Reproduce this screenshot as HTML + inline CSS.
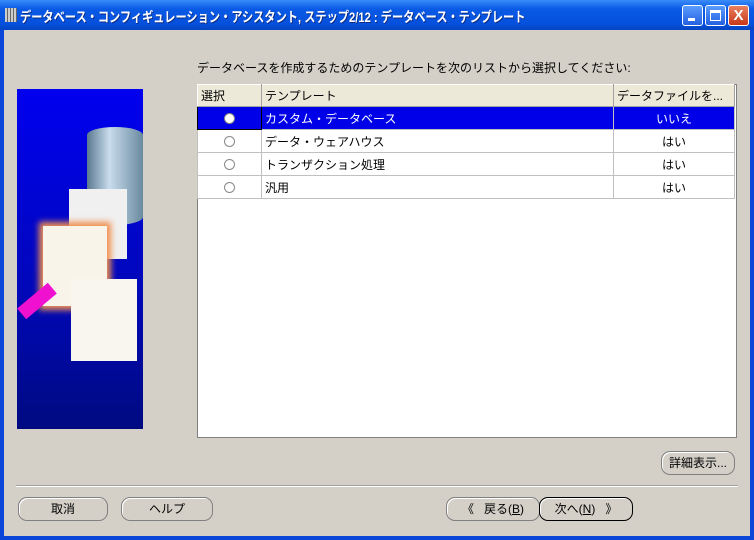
<!DOCTYPE html>
<html><head><meta charset="utf-8"><style>
*{margin:0;padding:0;box-sizing:border-box}
body{width:754px;height:540px;overflow:hidden;font-family:"Liberation Sans","Noto Sans CJK JP",sans-serif;font-size:12px;background:#0a46d8;position:relative}
.title{position:absolute;left:0;top:0;width:754px;height:30px;background:linear-gradient(#3a8cf8,#0a5ae6 30%,#0550dc 80%,#0444c0);color:#fff;font-size:14px;font-weight:bold}
.title span{position:absolute;left:20px;top:7px;text-shadow:1px 1px #0a2a80;white-space:nowrap;transform:scaleX(0.8);transform-origin:left}
.ico{position:absolute;left:5px;top:8px;width:12px;height:14px;background:repeating-linear-gradient(90deg,#ccc 0 2px,#666 2px 3px)}
.tb{position:absolute;top:5px;width:21px;height:21px;border:1px solid #fff;border-radius:3px;background:linear-gradient(#5a9cff,#2460e0)}
.client{position:absolute;left:4px;top:30px;width:746px;height:506px;background:#d4d0c8}
.a{position:absolute}
.img{left:13px;top:59px;width:126px;height:340px;background:linear-gradient(#0000f0,#0008b8 60%,#000a80)}
table{position:absolute;left:193px;top:54px;border-collapse:collapse;background:#fff;font-size:12px}
td{height:23px;border:1px solid #c0c0c0;padding:0 3px}
th{height:22px;font-weight:normal;text-align:left;padding:0 3px;background:#ece9d8;border:1px solid #a0a0a0;border-top-color:#fff;border-left-color:#fff}
.sel td{background:#0000e8;color:#fff}
.c{text-align:center}
.r{display:inline-block;width:11px;height:11px;border:1px solid #888;border-radius:50%;background:#fff;vertical-align:middle}
.tbl{left:193px;top:54px;width:540px;height:354px;background:#fff;border:1px solid #808080}
.btn{position:absolute;height:24px;border:1px solid #808080;border-radius:9px;background:#d4d0c8;text-align:center;line-height:22px;box-shadow:inset 1px 1px #fff}
</style></head><body>
<div class="title"><div class="ico"></div><span>データベース・コンフィギュレーション・アシスタント, ステップ2/12 : データベース・テンプレート</span>
<div class="tb" style="left:682px"><div style="position:absolute;left:5px;top:12px;width:7px;height:3px;background:#fff"></div></div>
<div class="tb" style="left:705px"><div style="position:absolute;left:4px;top:4px;width:11px;height:11px;border:1px solid #fff;border-top-width:3px"></div></div>
<div class="tb" style="left:728px;background:linear-gradient(#e88060,#c83818);color:#fff;text-align:center;font-size:15px;line-height:19px">X</div>
</div>
<div class="client">
<div class="a" style="left:193px;top:29px">データベースを作成するためのテンプレートを次のリストから選択してください:</div>
<div class="a img">
<div class="a" style="left:70px;top:38px;width:56px;height:98px;border-radius:28px/8px;background:linear-gradient(90deg,#5a7890,#c8dcec 40%,#6a8aa0)"></div>
<div class="a" style="left:52px;top:100px;width:58px;height:70px;background:#f0f0f0"></div>
<div class="a" style="left:26px;top:137px;width:64px;height:80px;background:#f8f4ea;box-shadow:0 0 6px 4px #f09050"></div>
<div class="a" style="left:54px;top:190px;width:66px;height:82px;background:#f8f6ee"></div>
<div class="a" style="left:0;top:205px;width:40px;height:14px;background:#f010d0;transform:rotate(-40deg)"></div>
</div>
<div class="a tbl"></div>
<table>
<tr><th style="width:64px">選択</th><th style="width:352px">テンプレート</th><th style="width:121px">データファイルを...</th></tr>
<tr class="sel"><td class="c" style="border-color:#000"><span class="r"></span></td><td>カスタム・データベース</td><td class="c">いいえ</td></tr>
<tr><td class="c"><span class="r"></span></td><td>データ・ウェアハウス</td><td class="c">はい</td></tr>
<tr><td class="c"><span class="r"></span></td><td>トランザクション処理</td><td class="c">はい</td></tr>
<tr><td class="c"><span class="r"></span></td><td>汎用</td><td class="c">はい</td></tr>
</table>
<div class="btn" style="left:657px;top:421px;width:74px">詳細表示...</div>
<div class="a" style="left:12px;top:455px;width:722px;height:2px;border-top:1px solid #a0a0a0;border-bottom:1px solid #fff"></div>
<div class="btn" style="left:14px;top:467px;width:90px">取消</div>
<div class="btn" style="left:117px;top:467px;width:92px">ヘルプ</div>
<div class="btn" style="left:442px;top:467px;width:94px">《&nbsp;&nbsp; 戻る(<u>B</u>)</div>
<div class="btn" style="left:535px;top:467px;width:94px;border-color:#000">次へ(<u>N</u>)&nbsp;&nbsp; 》</div>
</div>
</body></html>
